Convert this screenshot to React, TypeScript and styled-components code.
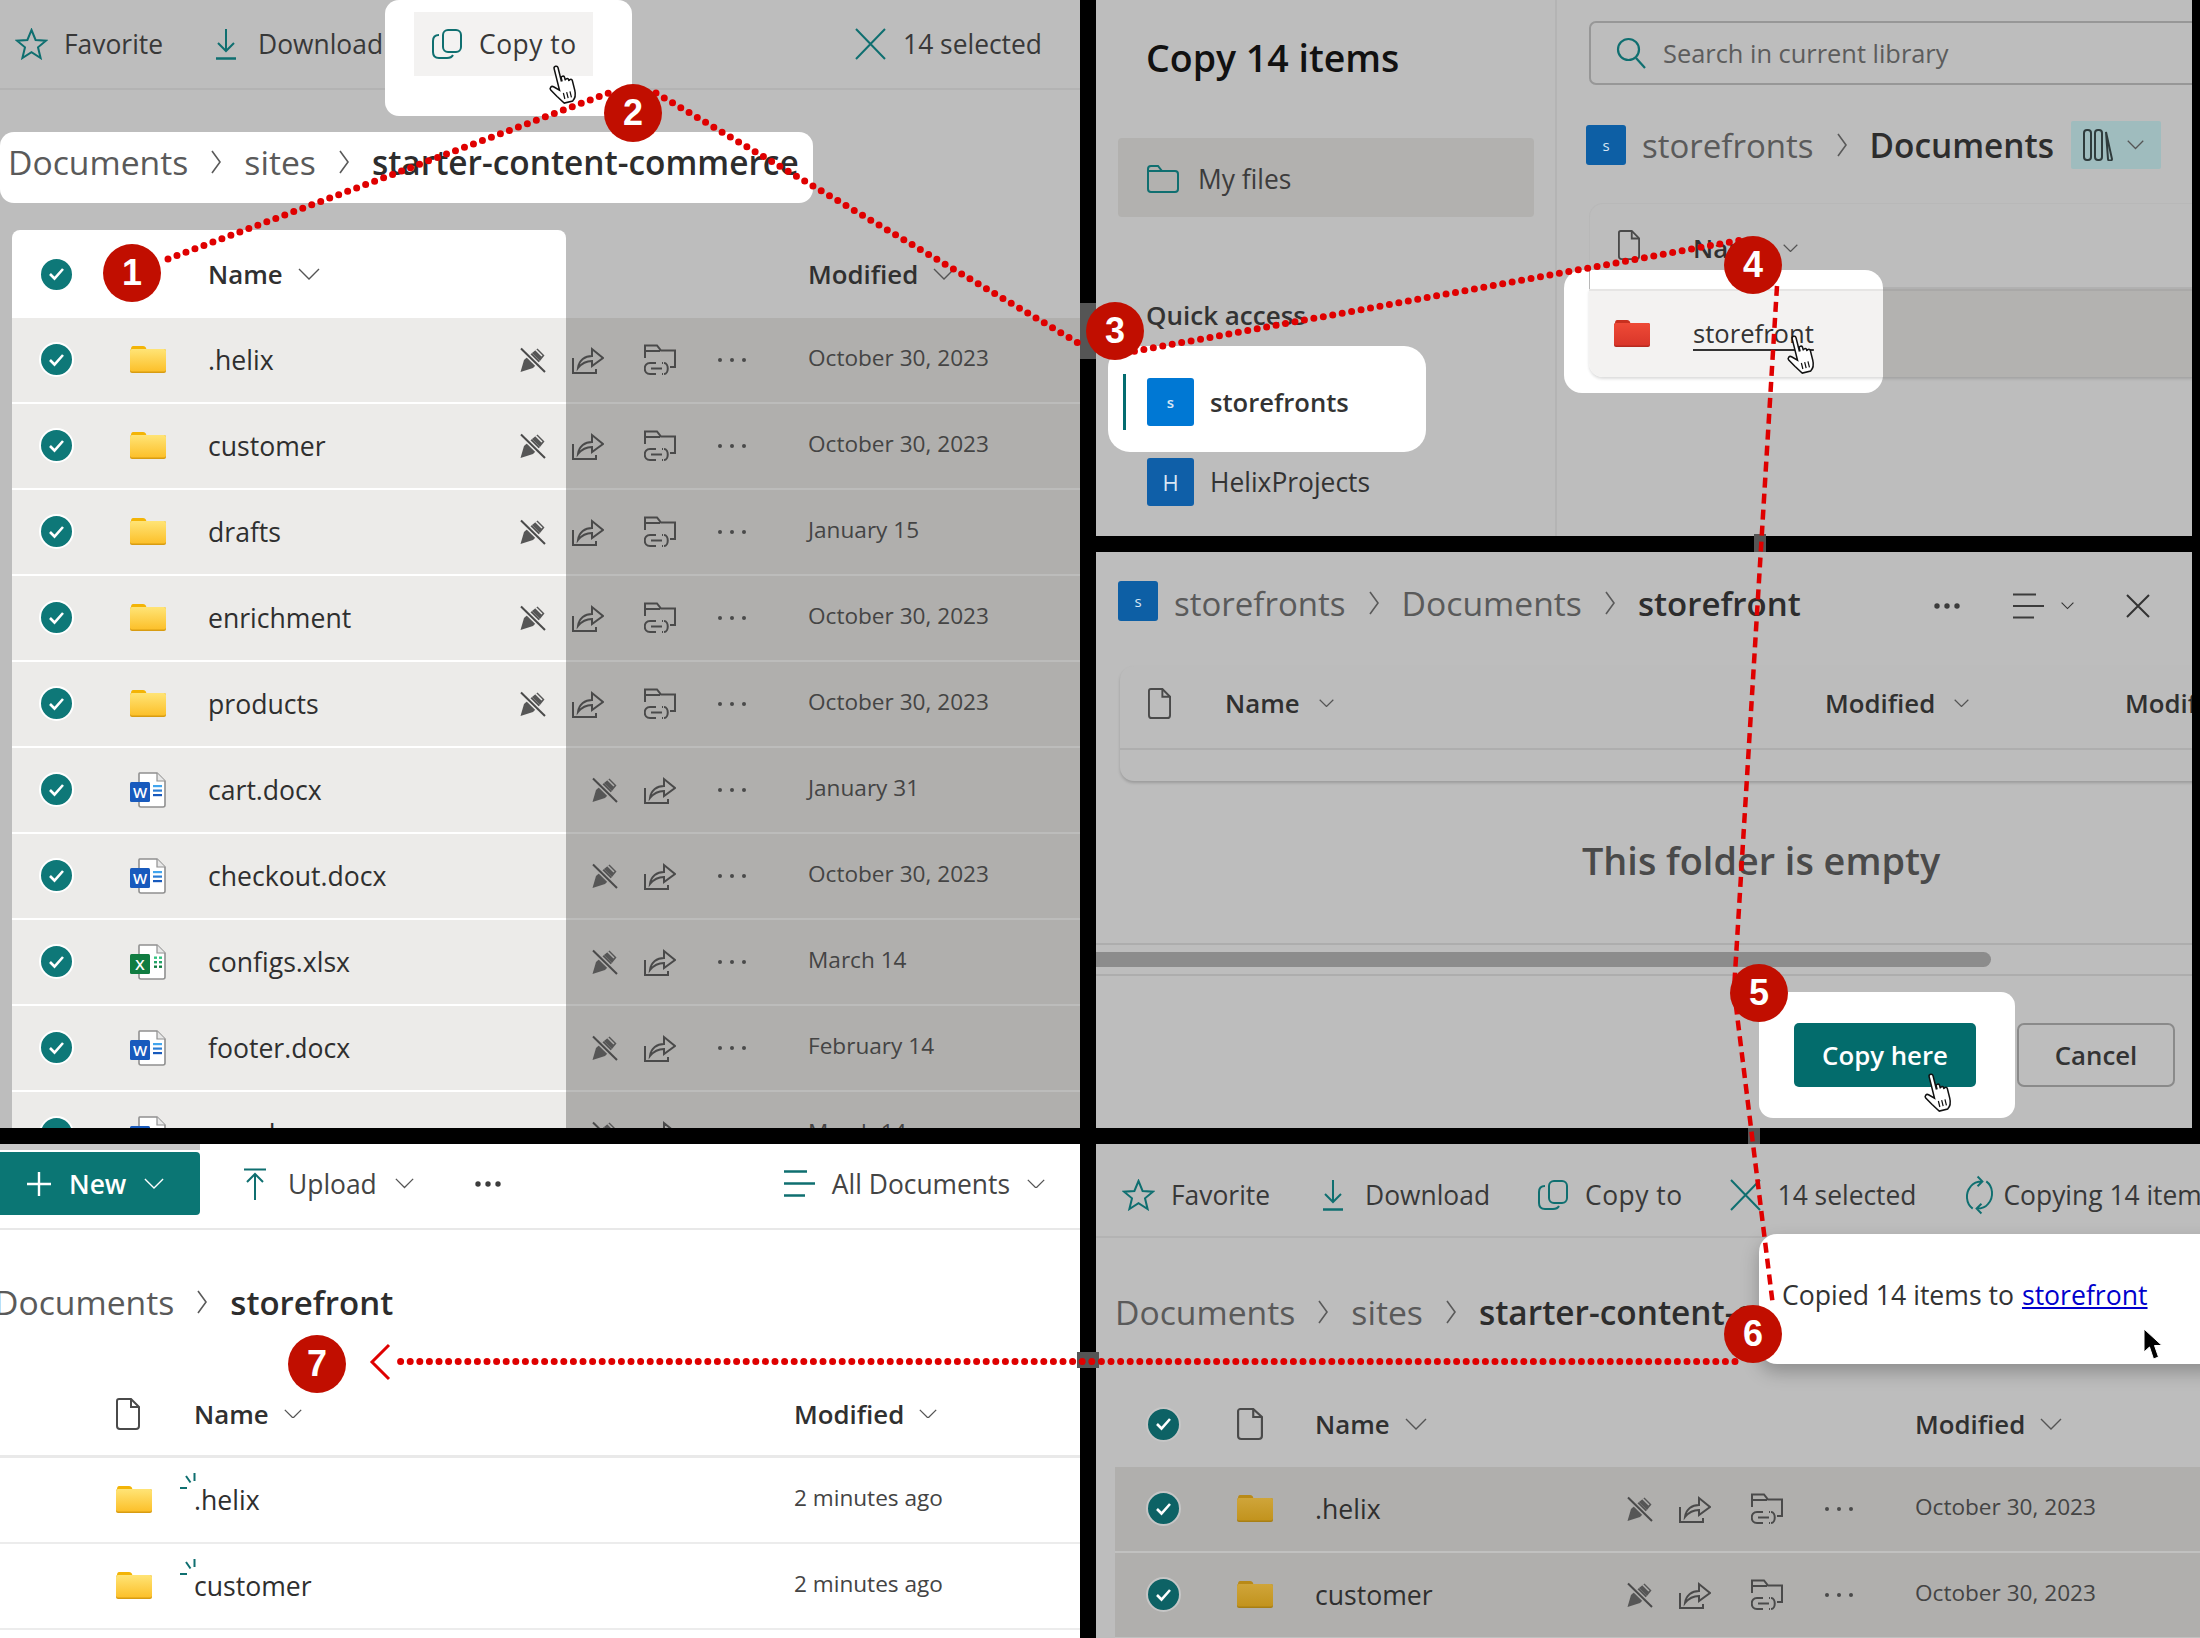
import React from 'react';
import styled, { createGlobalStyle, css } from 'styled-components';

const FONT = '"Open Sans", "Noto Sans", sans-serif';
const TEAL = '#0f6f70';
const INK = '#383838';

const GlobalStyle = createGlobalStyle`
  html, body { margin: 0; padding: 0; background: #000; }
  body { font-family: ${FONT}; color: #333; }
  * { box-sizing: border-box; }
`;

/* ---------- icons ---------- */

const Star = () => (
  <svg width="33" height="32" viewBox="0 0 33 32" fill="none" stroke={TEAL} strokeWidth="2">
    <path d="M16.5 2 L20.6 12 L31 12.7 L23 19.3 L25.6 30 L16.5 24.2 L7.4 30 L10 19.3 L2 12.7 L12.4 12 Z" />
  </svg>
);

const Download = () => (
  <svg width="22" height="32" viewBox="0 0 22 32" fill="none" stroke={TEAL} strokeWidth="2">
    <path d="M11 1 V23 M3 15 L11 23 L19 15" />
    <path d="M1 30.5 H21" strokeWidth="2.5" />
  </svg>
);

const CopyIcon = () => (
  <svg width="30" height="30" viewBox="0 0 30 30" fill="none" stroke={TEAL} strokeWidth="2">
    <rect x="11" y="1" width="18" height="22" rx="5" />
    <path d="M7 6 C3 6 1 8 1 12 V23 C1 27 3 29 7 29 H15 C19 29 20 28 21 26" />
  </svg>
);

const CrossBig = () => (
  <svg width="31" height="32" viewBox="0 0 31 32" fill="none" stroke={TEAL} strokeWidth="2">
    <path d="M1 1 L30 31 M30 1 L1 31" />
  </svg>
);

const SyncIcon = () => (
  <svg width="34" height="40" viewBox="0 0 34 40" fill="none" stroke={TEAL} strokeWidth="2">
    <path d="M10 34 C3 29 2 18 8 11 C11 7 15 6 20 6 M15 1 L20 6 L15 11" />
    <path d="M24 6 C31 11 32 22 26 29 C23 33 19 34 14 34 M19 29 L14 34 L19 39" />
  </svg>
);

const Search = () => (
  <svg width="30" height="32" viewBox="0 0 30 32" fill="none" stroke={TEAL} strokeWidth="2.2">
    <circle cx="12.5" cy="12.5" r="10.5" />
    <path d="M20 21 L29 31" />
  </svg>
);

const OutlineFolder = () => (
  <svg width="32" height="28" viewBox="0 0 32 28" fill="none" stroke={TEAL} strokeWidth="2">
    <path d="M1 6 V4 C1 2 2 1 4 1 H11 L15 6 H28 C30 6 31 7 31 9 V24 C31 26 30 27 28 27 H4 C2 27 1 26 1 24 Z" />
    <path d="M1 6 H15" />
  </svg>
);

const PinOff = ({ gap }: { gap: string }) => (
  <svg width="26" height="26" viewBox="0 0 26 26" fill="none">
    <path d="M0.5 25 L4 13 L12 6 L20 14 L13 21 Z" fill="#565656" />
    <path d="M12 6 L17.5 1.5 L24.5 8.5 L20 14 Z" fill="#565656" />
    <path d="M15.5 2.5 L22 9" stroke={gap} strokeWidth="1.5" />
    <path d="M1 1.5 L25 25" stroke={gap} strokeWidth="5" />
    <path d="M1 1.5 L25 25" stroke="#4a4a4a" strokeWidth="2" />
  </svg>
);

const Share = () => (
  <svg width="32" height="28" viewBox="0 0 32 28" fill="none" stroke="#4a4a4a" strokeWidth="2">
    <path d="M1 12 V27 H24 V23" />
    <path d="M6 22 C7 14 13 10 20 10 V3 L31 12 L20 20 V15 C14 15 10 17 6 22 Z" />
  </svg>
);

const FolderLink = () => (
  <svg width="32" height="31" viewBox="0 0 32 31" fill="none" stroke="#4a4a4a" strokeWidth="2">
    <path d="M1 14 V1.5 H13 L17 6.5 H31 V23 H26 M1 7 H16" />
    <path d="M12 19 H6 C-1 19 -1 30 6 30 H12 M19 19 H18 M19 30 H18" />
    <path d="M20 19 C25 19 25 30 20 30" />
    <path d="M7 24.5 H18" />
  </svg>
);

const DotRow = () => (
  <svg width="28" height="6" viewBox="0 0 28 6" fill="#4a4a4a">
    <circle cx="2" cy="3" r="2" />
    <circle cx="14" cy="3" r="2" />
    <circle cx="26" cy="3" r="2" />
  </svg>
);

const HeavyDots = () => (
  <svg width="26" height="6" viewBox="0 0 26 6" fill="#3c3c3c">
    <circle cx="3" cy="3" r="2.7" />
    <circle cx="13" cy="3" r="2.7" />
    <circle cx="23" cy="3" r="2.7" />
  </svg>
);

const Chevron = ({ w = 22, color = '#555' }: { w?: number; color?: string }) => (
  <svg width={w} height={w * 0.55} viewBox="0 0 22 12" fill="none" stroke={color} strokeWidth={44 / (w + 10)}>
    <path d="M1 1 L11 11 L21 1" />
  </svg>
);

const CrumbChevron = () => (
  <svg width="10" height="24" viewBox="0 0 10 24" fill="none" stroke="#5a5a5a" strokeWidth="1.6">
    <path d="M1 1 L9 12 L1 23" />
  </svg>
);

const BlankFile = ({ w = 24, h = 32, stroke = '#4a4a4a' }: { w?: number; h?: number; stroke?: string }) => (
  <svg width={w} height={h} viewBox="0 0 24 32" fill="none" stroke={stroke} strokeWidth="2" preserveAspectRatio="none">
    <path d="M3 1 H15 L23 9 V28 C23 30 22 31 20 31 H4 C2 31 1 30 1 28 V3 C1 2 2 1 3 1 Z" />
    <path d="M15 1 V9 H23" />
  </svg>
);

const folderTones = {
  yellow: { tab: '#f3b406', top: '#ffe476', bottom: '#fcc02a', edge: '#d89c12', id: 'folder-yellow' },
  dim: { tab: '#b98a17', top: '#cfa53a', bottom: '#c2931d', edge: '#a87f14', id: 'folder-dim' },
  red: { tab: '#c7301f', top: '#ee4a36', bottom: '#d9362a', edge: '#b62a1f', id: 'folder-red' },
};

const Folder = ({ tone = 'yellow' }: { tone?: keyof typeof folderTones }) => {
  const t = folderTones[tone];
  return (
    <svg width="36" height="27" viewBox="0 0 36 27">
      <defs>
        <linearGradient id={t.id} x1="0" y1="0" x2="0" y2="1">
          <stop offset="0" stopColor={t.top} />
          <stop offset="1" stopColor={t.bottom} />
        </linearGradient>
      </defs>
      <path d="M1 5 V3 C1 1 2 0 3 0 H13 C15 0 15.5 1 16 2 L17 5 Z" fill={t.tab} />
      <rect x="0" y="3" width="36" height="24" rx="2" fill={t.edge} />
      <rect x="0" y="3" width="36" height="22.5" rx="2" fill={`url(#${t.id})`} />
    </svg>
  );
};

const OfficeDoc = ({ kind }: { kind: 'word' | 'excel' }) => {
  const word = kind === 'word';
  return (
    <svg width="36" height="36" viewBox="0 0 36 36">
      <path d="M9.5 1 H27 L35 9 V33 C35 34 34 35 33 35 H11 C10 35 9 34 9 33 V2 C9 1.5 9.2 1 9.5 1 Z" fill="#fff" stroke="#909090" strokeWidth="1.6" />
      <path d="M27 1 V9 H35" fill="#e8e8e8" stroke="#909090" strokeWidth="1.2" />
      {word ? (
        <>
          <rect x="23" y="13" width="9" height="2.2" fill="#41a5ee" />
          <rect x="23" y="17.5" width="9" height="2.2" fill="#2b7cd3" />
          <rect x="23" y="22" width="9" height="2.2" fill="#185abd" />
        </>
      ) : (
        <>
          <rect x="24" y="12.5" width="3" height="2.4" fill="#33c481" />
          <rect x="29" y="12.5" width="3" height="2.4" fill="#33c481" />
          <rect x="24" y="17" width="3" height="2.4" fill="#21a366" />
          <rect x="29" y="17" width="3" height="2.4" fill="#21a366" />
          <rect x="24" y="21.5" width="3" height="2.4" fill="#107c41" />
          <rect x="29" y="21.5" width="3" height="2.4" fill="#107c41" />
        </>
      )}
      <rect x="0" y="10" width="20" height="20" rx="1.5" fill={word ? '#185abd' : '#107c41'} />
      <text x="10" y="25.5" textAnchor="middle" fontFamily={FONT} fontSize="15" fontWeight="600" fill="#fff">
        {word ? 'W' : 'X'}
      </text>
    </svg>
  );
};

const Hand = () => (
  <svg width="37" height="42" viewBox="0 0 24 27">
    <g transform="rotate(-14 12 14)">
      <path
        d="M8 2.2 C8 .6 10.6 .6 10.6 2.2 V11 H11 V9.2 C11 8 13.2 8 13.2 9.2 V11.4 C13.2 10.2 15.4 10.2 15.4 11.4 V12.4 C15.4 11.2 17.6 11.2 17.6 12.6 V19 C17.6 22 16.2 24.5 14.6 25.5 H9 C8 24.2 7 22.5 5.5 20.2 L2.5 15.2 C1.8 13.6 3.6 12.4 4.8 13.5 L8 16.6 Z"
        fill="#fff"
        stroke="#111"
        strokeWidth="1"
      />
      <path d="M10 19 V23 M12.2 19 V23 M14.4 19 V23" stroke="#111" strokeWidth="0.8" />
    </g>
  </svg>
);

const ArrowCursor = () => (
  <svg width="20" height="34" viewBox="0 0 20 34">
    <path d="M1 1 V24 L6.5 19 L10.5 31 L15.5 29 L11.5 17.5 H19 Z" fill="#000" stroke="#fff" strokeWidth="1" />
  </svg>
);

/* ---------- page frame ---------- */

const Page = styled.div`
  position: relative;
  width: 2200px;
  height: 1638px;
  display: flex;
  gap: 16px;
  background: #000;
  overflow: hidden;
`;

const Column = styled.div<{ $w: number }>`
  width: ${(p) => p.$w}px;
  display: flex;
  flex-direction: column;
  gap: 16px;
`;

const Panel = styled.section<{ $h: number; $bg?: string; $row?: boolean; $gutter?: number }>`
  position: relative;
  isolation: isolate;
  height: ${(p) => p.$h}px;
  flex: none;
  overflow: hidden;
  margin-right: ${(p) => p.$gutter ?? 0}px;
  background: ${(p) => p.$bg ?? '#bdbdbd'};
  display: flex;
  flex-direction: ${(p) => (p.$row ? 'row' : 'column')};
`;

/* ---------- command bars ---------- */

const CommandBar = styled.div<{ $h: number; $top?: number; $left: number }>`
  position: relative;
  flex: none;
  height: ${(p) => p.$h}px;
  padding: ${(p) => p.$top ?? 0}px 0 2px ${(p) => p.$left}px;
  display: flex;
  align-items: center;
  gap: 46px;
  white-space: nowrap;
  &::after {
    content: '';
    position: absolute;
    left: 0;
    right: 0;
    bottom: 0;
    height: 2px;
    background: #b3b3b3;
    z-index: -2;
  }
`;

const CommandItem = styled.div<{ $active?: boolean; $end?: boolean; $gap?: number }>`
  position: relative;
  flex: none;
  display: flex;
  align-items: center;
  gap: ${(p) => p.$gap ?? 16}px;
  font-size: 26.4px;
  color: ${INK};
  ${(p) =>
    p.$end &&
    css`
      margin-left: auto;
      padding-right: 38px;
    `}
  ${(p) =>
    p.$active &&
    css`
      height: 64px;
      margin: 0 -15px;
      padding: 0 16px;
      background: #f3f2f1;
      &::before {
        content: '';
        position: absolute;
        inset: -12px -39px -40px -29px;
        background: #fff;
        border-radius: 14px;
        z-index: -1;
      }
    `}
`;

const IconBox = styled.span`
  width: 33px;
  flex: none;
  display: flex;
  justify-content: center;
  align-items: center;
`;

const WideLabel = styled.span`
  letter-spacing: 0.5px;
`;

/* ---------- breadcrumbs ---------- */

const Crumbs = styled.div<{ $spot?: boolean; $top?: number; $left?: number; $h?: number; $lift?: number; $drop?: number }>`
  flex: none;
  height: ${(p) => p.$h ?? 50}px;
  margin-top: ${(p) => p.$top ?? 0}px;
  padding: ${(p) => p.$drop ?? 0}px 0 ${(p) => p.$lift ?? 0}px ${(p) => p.$left ?? 0}px;
  display: flex;
  align-items: center;
  gap: 23px;
  white-space: nowrap;
  ${(p) =>
    p.$spot &&
    css`
      width: 813px;
      background: #fff;
      border-radius: 14px;
    `}
`;

const CrumbText = styled.span<{ $strong?: boolean; $tight?: boolean }>`
  font-size: ${(p) => (p.$tight ? 33 : p.$strong ? 33.4 : 33.7)}px;
  font-weight: ${(p) => (p.$strong ? 600 : 400)};
  color: ${(p) => (p.$strong ? '#2d2d2d' : '#5a5a5a')};
`;

const SiteTile = styled.div<{ $w: number; $h: number; $color: string; $size?: number }>`
  flex: none;
  width: ${(p) => p.$w}px;
  height: ${(p) => p.$h}px;
  display: flex;
  align-items: center;
  justify-content: center;
  background: ${(p) => p.$color};
  border-radius: 3px;
  color: #d8e6f4;
  font-size: ${(p) => p.$size ?? 15}px;
`;

/* ---------- file lists ---------- */

const tones = {
  spot: css`
    background: linear-gradient(to right, #fff 554px, #bcbcbb 554px) bottom / 100% 2px no-repeat,
      linear-gradient(to right, #ecebe9 554px, #b0afad 554px);
  `,
  dim: css`
    background: linear-gradient(#c1c1c0, #c1c1c0) bottom / 100% 2px no-repeat, #b0afad;
  `,
  plain: css`
    background: linear-gradient(#ececec, #ececec) bottom / 100% 2px no-repeat, #fff;
  `,
};

const grid = css`
  display: grid;
  grid-template-columns: 118px 78px 310px 290px auto;
  align-items: center;
`;

const RowShell = styled.div<{ $tone: keyof typeof tones; $left: number; $inset?: number }>`
  ${grid}
  flex: none;
  height: 86px;
  margin-left: ${(p) => p.$left}px;
  padding-left: ${(p) => p.$inset ?? 0}px;
  padding-bottom: 3px;
  ${(p) => tones[p.$tone]}
  white-space: nowrap;
`;

const HeaderShell = styled.div<{ $left: number; $inset?: number; $spot?: boolean; $top?: number; $line?: boolean; $h?: number }>`
  ${grid}
  position: relative;
  flex: none;
  height: ${(p) => p.$h ?? 86}px;
  margin-top: ${(p) => p.$top ?? 0}px;
  margin-left: ${(p) => p.$left}px;
  padding-left: ${(p) => p.$inset ?? 0}px;
  white-space: nowrap;
  ${(p) => p.$line && 'border-bottom: 3px solid #e9e9e9;'}
  ${(p) =>
    p.$spot &&
    css`
      &::before {
        content: '';
        position: absolute;
        left: 0;
        top: 0;
        bottom: 0;
        width: 554px;
        background: #fff;
        border-radius: 8px 8px 0 0;
        z-index: -1;
      }
    `}
`;

const CheckCircle = styled.span<{ $dark?: boolean }>`
  width: 35px;
  height: 35px;
  margin-left: 27px;
  border-radius: 50%;
  border: 2px solid ${(p) => (p.$dark ? '#c6c6c6' : '#fff')};
  background: ${(p) => (p.$dark ? '#0d6265' : '#0e7878')};
  display: flex;
  align-items: center;
  justify-content: center;
`;

const Check = ({ dark }: { dark?: boolean }) => (
  <CheckCircle $dark={dark}>
    <svg width="17" height="14" viewBox="0 0 17 14" fill="none" stroke="#fff" strokeWidth="2.6">
      <path d="M2 7 L6.5 11.5 L15 2" />
    </svg>
  </CheckCircle>
);

const Label = styled.span`
  grid-column: 3;
  display: flex;
  align-items: center;
  gap: 15px;
  font-size: 25.8px;
  font-weight: 600;
  color: #303030;
`;

const DateLabel = styled(Label)`
  grid-column: 5;
`;

const NameCell = styled.span`
  position: relative;
  font-size: 26.6px;
  color: #2f2f2f;
`;

const SyncTicks = styled.svg`
  position: absolute;
  left: -15px;
  top: -10px;
`;

const ActionCell = styled.span`
  display: flex;
  justify-content: flex-end;
  align-items: center;
  gap: 32px;
  padding-right: 56px;
`;

const ActionSlot = styled.span<{ $pin?: boolean }>`
  width: 40px;
  flex: none;
  display: flex;
  justify-content: center;
  ${(p) => p.$pin && 'margin-right: -17px;'}
`;

const DateCell = styled.span`
  grid-column: 5;
  font-size: 22.6px;
  color: #444;
  margin-bottom: 4px;
`;

type Kind = 'folder' | 'word' | 'excel';

interface FileRowProps {
  name: string;
  kind: Kind;
  date: string;
  tone: keyof typeof tones;
  left: number;
  inset?: number;
  selected?: boolean;
  syncing?: boolean;
}

const FileRow = ({ name, kind, date, tone, left, inset, selected, syncing }: FileRowProps) => (
  <RowShell $tone={tone} $left={left} $inset={inset}>
    <span>{selected && <Check dark={tone === 'dim'} />}</span>
    {kind === 'folder' ? <Folder tone={tone === 'dim' ? 'dim' : 'yellow'} /> : <OfficeDoc kind={kind} />}
    <NameCell>
      {syncing && (
        <SyncTicks width="18" height="18" viewBox="0 0 18 18" fill="none" stroke={TEAL} strokeWidth="2">
          <path d="M15.5 1 V9 M7 4 L11.5 10.5 M1 16 H8" />
        </SyncTicks>
      )}
      {name}
    </NameCell>
    {selected ? (
      <ActionCell>
        <ActionSlot $pin>
          <PinOff gap={tone === 'spot' && kind === 'folder' ? '#ecebe9' : '#b0afad'} />
        </ActionSlot>
        <ActionSlot>
          <Share />
        </ActionSlot>
        {kind === 'folder' && (
          <ActionSlot>
            <FolderLink />
          </ActionSlot>
        )}
        <ActionSlot>
          <DotRow />
        </ActionSlot>
      </ActionCell>
    ) : (
      <span />
    )}
    <DateCell>{date}</DateCell>
  </RowShell>
);

/* ---------- copy dialog, left side ---------- */

const Rail = styled.div`
  flex: none;
  width: 461px;
  padding: 31px 21px 0 22px;
  border-right: 2px solid #b4b4b4;
  display: flex;
  flex-direction: column;
`;

const RailTitle = styled.h2`
  margin: 0;
  padding-left: 28px;
  font-size: 37.5px;
  line-height: 54px;
  font-weight: 600;
  color: #111;
`;

const RailSelected = styled.div`
  flex: none;
  margin-top: 53px;
  height: 79px;
  padding: 2px 0 0 29px;
  display: flex;
  align-items: center;
  gap: 19px;
  background: #b2b1af;
  border-radius: 4px;
  font-size: 26.4px;
  color: #3c3c3c;
`;

const RailHeading = styled.div`
  margin-top: 80px;
  padding-left: 28px;
  font-size: 26px;
  line-height: 36px;
  font-weight: 600;
  color: #333;
`;

const RailSite = styled.div<{ $spot?: boolean; $top: number }>`
  position: relative;
  flex: none;
  margin-top: ${(p) => p.$top}px;
  padding-left: 29px;
  height: 48px;
  display: flex;
  align-items: center;
  gap: 16px;
  font-size: ${(p) => (p.$spot ? 25.6 : 26.4)}px;
  font-weight: ${(p) => (p.$spot ? 600 : 400)};
  color: #333;
  ${(p) =>
    p.$spot &&
    css`
      &::before {
        content: '';
        position: absolute;
        inset: -32px 108px -26px -10px;
        background: #fff;
        border-radius: 22px;
        z-index: -1;
      }
      &::after {
        content: '';
        position: absolute;
        left: 5px;
        top: -4px;
        width: 3px;
        height: 56px;
        background: #036c70;
      }
    `}
`;

/* ---------- copy dialog, right side ---------- */

const Browser = styled.div`
  flex: 1;
  min-width: 0;
  padding: 21px 0 0 32px;
  display: flex;
  flex-direction: column;
`;

const SearchBox = styled.div`
  flex: none;
  height: 64px;
  margin-right: -12px;
  padding-left: 25px;
  display: flex;
  align-items: center;
  gap: 17px;
  border: 2px solid #979797;
  border-radius: 7px;
  font-size: 25.4px;
  color: #5c5c5c;
`;

const ViewButton = styled.div`
  flex: none;
  width: 90px;
  height: 48px;
  margin-left: -6px;
  padding-left: 12px;
  display: flex;
  align-items: center;
  gap: 12px;
  background: #9fbcbe;
  border-radius: 2px;
`;

const BrowseHeader = styled.div`
  position: relative;
  flex: none;
  margin-top: 35px;
  margin-right: -10px;
  height: 86px;
  padding: 26px 0 0 28px;
  display: flex;
  align-items: flex-start;
  gap: 53px;
  border-radius: 14px 0 0 0;
  border-left: 1px solid #b8b8b8;
  border-top: 1px solid #b8b8b8;
  font-size: 25.8px;
  font-weight: 600;
  color: #303030;
  &::after {
    content: '';
    position: absolute;
    left: 0;
    right: 0;
    bottom: 0;
    height: 2px;
    background: #b1b1b1;
    z-index: -2;
  }
`;

const HeaderName = styled.span`
  display: flex;
  align-items: center;
  gap: 15px;
`;

const BrowseRow = styled.div`
  position: relative;
  flex: none;
  height: 88px;
  margin-right: -10px;
  padding-left: 25px;
  display: flex;
  align-items: center;
  gap: 43px;
  border-radius: 0 0 0 14px;
  background: linear-gradient(to right, #f3f2f1 294px, #b3b2b0 294px);
  box-shadow: 0 2px 3px rgba(0, 0, 0, 0.14), inset 0 2px 0 rgba(0, 0, 0, 0.05);
  font-size: 25.6px;
  color: #333;
  &::before {
    content: '';
    position: absolute;
    left: -25px;
    top: -19px;
    bottom: -16px;
    width: 319px;
    background: #fff;
    border-radius: 18px;
    z-index: -1;
  }
`;

const FolderLinkText = styled.span`
  text-decoration: underline;
  text-underline-offset: 6px;
`;

/* ---------- destination picker ---------- */

const PickerBar = styled.div`
  flex: none;
  height: 40px;
  margin-top: 29px;
  padding: 0 42px 0 22px;
  display: flex;
  align-items: center;
  gap: 16px;
`;

const PickerTools = styled.div`
  margin-left: auto;
  padding-top: 10px;
  display: flex;
  align-items: center;
  gap: 52px;
`;

const ToolGroup = styled.div`
  display: flex;
  align-items: center;
  gap: 17px;
`;

const PickerCard = styled.div`
  flex: none;
  height: 115px;
  margin: 45px -20px 0 24px;
  border-radius: 14px 0 0 14px;
  box-shadow: 0 2px 3px rgba(0, 0, 0, 0.18);
  background: #bcbcbc;
`;

const PickerHead = styled.div`
  height: 84px;
  padding: 0 0 8px 28px;
  display: flex;
  align-items: center;
  border-bottom: 2px solid #aeaeae;
  font-size: 25.8px;
  font-weight: 600;
  color: #303030;
  white-space: nowrap;
`;

const PickerCol = styled.span<{ $w: number }>`
  flex: none;
  width: ${(p) => p.$w}px;
  display: flex;
  align-items: center;
  gap: 19px;
`;

const EmptyNote = styled.div`
  flex: none;
  margin-top: 52px;
  padding-left: 486px;
  font-size: 37.8px;
  line-height: 56px;
  font-weight: 600;
  color: #4a4a4a;
`;

const ScrollTrack = styled.div`
  flex: none;
  margin-top: 54px;
  height: 33px;
  display: flex;
  align-items: center;
  border-top: 2px solid #adadad;
  border-bottom: 2px solid #adadad;
`;

const ScrollThumb = styled.div`
  width: 895px;
  height: 15px;
  background: #8c8c8c;
  border-radius: 0 8px 8px 0;
`;

const FooterBar = styled.div`
  flex: none;
  margin-top: 47px;
  padding-right: 17px;
  display: flex;
  justify-content: flex-end;
  gap: 41px;
`;

const PrimaryButton = styled.button`
  position: relative;
  width: 182px;
  height: 64px;
  border: 0;
  padding: 0;
  background: #036c6c;
  border-radius: 5px;
  color: #fff;
  font: 600 25.8px ${FONT};
  &::before {
    content: '';
    position: absolute;
    inset: -31px -39px -31px -35px;
    background: #fff;
    border-radius: 14px;
    z-index: -1;
  }
`;

const GhostButton = styled.button`
  width: 158px;
  height: 64px;
  padding: 0;
  background: transparent;
  border: 2px solid #8a8a8a;
  border-radius: 7px;
  color: #333;
  font: 600 25.8px ${FONT};
`;

/* ---------- result library ---------- */

const TopStrip = styled.div`
  flex: none;
  width: 200px;
  height: 6px;
  background: #c8c8c8;
`;

const LibraryBar = styled.div`
  flex: none;
  height: 63px;
  margin-top: 2px;
  padding-right: 35px;
  display: flex;
  align-items: center;
  font-size: 26.4px;
  color: #444;
  white-space: nowrap;
`;

const NewButton = styled.div`
  flex: none;
  width: 200px;
  height: 63px;
  padding-left: 27px;
  display: flex;
  align-items: center;
  gap: 18px;
  background: #0b7674;
  border-radius: 0 4px 4px 0;
  color: #fff;
  font-weight: 600;
  font-size: 26.4px;
`;

const BarGroup = styled.div<{ $left?: number; $push?: boolean }>`
  flex: none;
  display: flex;
  align-items: center;
  gap: 22px;
  margin-left: ${(p) => (p.$push ? 'auto' : `${p.$left ?? 0}px`)};
  ${(p) => p.$push && 'gap: 17px;'}
`;

const ChevronGap = styled.span`
  display: flex;
  margin-left: -4px;
`;

const HairLine = styled.div`
  flex: none;
  height: 2px;
  margin-top: 13px;
  background: #e8e8e8;
`;

/* ---------- toast ---------- */

const Toast = styled.div`
  position: absolute;
  left: 663px;
  top: 90px;
  width: 460px;
  height: 130px;
  padding: 0 0 8px 23px;
  display: flex;
  align-items: center;
  gap: 8px;
  background: #fff;
  border-radius: 18px 0 0 18px;
  box-shadow: 0 8px 18px rgba(0, 0, 0, 0.25);
  font-size: 26.6px;
  color: #333;
  white-space: nowrap;
`;

const ToastLink = styled.a`
  color: #0000cc;
  text-decoration: underline;
`;

/* ---------- annotation layer ---------- */

const Annotations = styled.div`
  position: absolute;
  inset: 0;
  z-index: 5;
  pointer-events: none;
`;

const Marker = styled.div<{ $x: number; $y: number }>`
  position: absolute;
  left: ${(p) => p.$x - 29}px;
  top: ${(p) => p.$y - 29}px;
  width: 58px;
  height: 58px;
  display: flex;
  align-items: center;
  justify-content: center;
  border-radius: 50%;
  background: #c10e00;
  color: #fff;
  font: 700 36px 'Liberation Sans', Arial, sans-serif;
`;

const Pointer = styled.div<{ $x: number; $y: number }>`
  position: absolute;
  left: ${(p) => p.$x}px;
  top: ${(p) => p.$y}px;
  line-height: 0;
`;

const library: { name: string; kind: Kind; date: string }[] = [
  { name: '.helix', kind: 'folder', date: 'October 30, 2023' },
  { name: 'customer', kind: 'folder', date: 'October 30, 2023' },
  { name: 'drafts', kind: 'folder', date: 'January 15' },
  { name: 'enrichment', kind: 'folder', date: 'October 30, 2023' },
  { name: 'products', kind: 'folder', date: 'October 30, 2023' },
  { name: 'cart.docx', kind: 'word', date: 'January 31' },
  { name: 'checkout.docx', kind: 'word', date: 'October 30, 2023' },
  { name: 'configs.xlsx', kind: 'excel', date: 'March 14' },
  { name: 'footer.docx', kind: 'word', date: 'February 14' },
  { name: 'nav.docx', kind: 'word', date: 'March 14' },
];

const markers: [number, number, number][] = [
  [1, 132, 273],
  [2, 633, 113],
  [3, 1115, 331],
  [4, 1753, 265],
  [5, 1759, 993],
  [6, 1753, 1334],
  [7, 317, 1364],
];

export default function App() {
  return (
    <Page>
      <GlobalStyle />
      <Column $w={1080}>
        <Panel $h={1128}>
          <CommandBar $h={90} $left={15}>
            <CommandItem>
              <IconBox>
                <Star />
              </IconBox>
              Favorite
            </CommandItem>
            <CommandItem>
              <IconBox>
                <Download />
              </IconBox>
              Download
            </CommandItem>
            <CommandItem $active>
              <IconBox>
                <CopyIcon />
              </IconBox>
              <WideLabel>Copy to</WideLabel>
            </CommandItem>
            <CommandItem $end>
              <IconBox>
                <CrossBig />
              </IconBox>
              14 selected
            </CommandItem>
          </CommandBar>
          <Crumbs $spot $top={42} $left={8} $h={71} $lift={11}>
            <CrumbText>Documents</CrumbText>
            <CrumbChevron />
            <CrumbText>sites</CrumbText>
            <CrumbChevron />
            <CrumbText $strong>starter-content-commerce</CrumbText>
          </Crumbs>
          <HeaderShell $left={12} $spot $top={27} $h={88}>
            <Check />
            <span />
            <Label>
              Name <Chevron />
            </Label>
            <DateLabel>
              Modified <Chevron />
            </DateLabel>
          </HeaderShell>
          {library.map((f) => (
            <FileRow key={f.name} {...f} tone="spot" left={12} selected />
          ))}
        </Panel>
        <Panel $h={494} $bg="#fff">
          <TopStrip />
          <LibraryBar>
            <NewButton>
              <svg width="24" height="24" viewBox="0 0 24 24" stroke="#fff" strokeWidth="2.4">
                <path d="M12 0 V24 M0 12 H24" />
              </svg>
              New
              <Chevron w={20} color="#fff" />
            </NewButton>
            <BarGroup $left={44}>
              <svg width="22" height="32" viewBox="0 0 22 32" fill="none" stroke={TEAL} strokeWidth="2">
                <path d="M0 1.5 H22 M11 6 V32 M3 14 L11 6 L19 14" />
              </svg>
              Upload
              <ChevronGap>
                <Chevron w={19} />
              </ChevronGap>
            </BarGroup>
            <BarGroup $left={61}>
              <HeavyDots />
            </BarGroup>
            <BarGroup $push>
              <svg width="32" height="27" viewBox="0 0 32 27" fill="none" stroke={TEAL} strokeWidth="2.4">
                <path d="M1 1.5 H24 M1 13.5 H32 M1 25.5 H22" />
              </svg>
              All Documents
              <Chevron w={18} />
            </BarGroup>
          </LibraryBar>
          <HairLine />
          <Crumbs $top={47}>
            <CrumbText style={{ marginLeft: -6 }}>Documents</CrumbText>
            <CrumbChevron />
            <CrumbText $strong $tight>
              storefront
            </CrumbText>
          </Crumbs>
          <HeaderShell $left={-2} $top={45} $line>
            <span />
            <BlankFile />
            <Label>
              Name <Chevron w={18} />
            </Label>
            <DateLabel>
              Modified <Chevron w={18} />
            </DateLabel>
          </HeaderShell>
          <FileRow name=".helix" kind="folder" date="2 minutes ago" tone="plain" left={-2} syncing />
          <FileRow name="customer" kind="folder" date="2 minutes ago" tone="plain" left={-2} syncing />
        </Panel>
      </Column>
      <Column $w={1104}>
        <Panel $h={536} $row $gutter={8}>
          <Rail>
            <RailTitle>Copy 14 items</RailTitle>
            <RailSelected>
              <OutlineFolder />
              My files
            </RailSelected>
            <RailHeading>Quick access</RailHeading>
            <RailSite $spot $top={45}>
              <SiteTile $w={47} $h={48} $color="#0078d4">
                s
              </SiteTile>
              storefronts
            </RailSite>
            <RailSite $top={32}>
              <SiteTile $w={47} $h={48} $color="#0f5fa8" $size={22}>
                H
              </SiteTile>
              HelixProjects
            </RailSite>
          </Rail>
          <Browser>
            <SearchBox>
              <Search />
              Search in current library
            </SearchBox>
            <Crumbs $top={35} $h={48} $drop={2} style={{ marginLeft: -3 }}>
              <SiteTile $w={40} $h={40} $color="#0d5fa5" style={{ marginRight: -7 }}>
                s
              </SiteTile>
              <CrumbText $tight>storefronts</CrumbText>
              <CrumbChevron />
              <CrumbText $strong>Documents</CrumbText>
              <ViewButton>
                <svg width="32" height="32" viewBox="0 0 32 32" fill="none" stroke="#2f3b3c" strokeWidth="2">
                  <rect x="1" y="1" width="7" height="30" rx="3" />
                  <rect x="12" y="1" width="7" height="30" rx="3" />
                  <path d="M23 3 L29 30 C29 32 25 32 25 30 L23 3 Z" />
                </svg>
                <Chevron w={17} />
              </ViewButton>
            </Crumbs>
            <BrowseHeader>
              <BlankFile w={22} h={30} />
              <HeaderName>
                Name <Chevron w={15} />
              </HeaderName>
            </BrowseHeader>
            <BrowseRow>
              <Folder tone="red" />
              <FolderLinkText>storefront</FolderLinkText>
            </BrowseRow>
          </Browser>
        </Panel>
        <Panel $h={576} $gutter={8}>
          <PickerBar>
            <SiteTile $w={40} $h={40} $color="#0d5fa5">
              s
            </SiteTile>
            <Crumbs $drop={4}>
              <CrumbText $tight>storefronts</CrumbText>
              <CrumbChevron />
              <CrumbText>Documents</CrumbText>
              <CrumbChevron />
              <CrumbText $strong $tight>
                storefront
              </CrumbText>
            </Crumbs>
            <PickerTools>
              <HeavyDots />
              <ToolGroup>
                <svg width="32" height="26" viewBox="0 0 32 26" fill="none" stroke="#3c3c3c" strokeWidth="2.2">
                  <path d="M1 1.5 H24 M1 13 H32 M1 24.5 H22" />
                </svg>
                <Chevron w={13} color="#333" />
              </ToolGroup>
              <svg width="24" height="24" viewBox="0 0 24 24" fill="none" stroke="#333" strokeWidth="2">
                <path d="M1 1 L23 23 M23 1 L1 23" />
              </svg>
            </PickerTools>
          </PickerBar>
          <PickerCard>
            <PickerHead>
              <PickerCol $w={77}>
                <BlankFile w={23} h={31} />
              </PickerCol>
              <PickerCol $w={600}>
                Name <Chevron w={15} />
              </PickerCol>
              <PickerCol $w={300}>
                Modified <Chevron w={15} />
              </PickerCol>
              <PickerCol $w={200}>Modified By</PickerCol>
            </PickerHead>
          </PickerCard>
          <EmptyNote>This folder is empty</EmptyNote>
          <ScrollTrack>
            <ScrollThumb />
          </ScrollTrack>
          <FooterBar>
            <PrimaryButton>Copy here</PrimaryButton>
            <GhostButton>Cancel</GhostButton>
          </FooterBar>
        </Panel>
        <Panel $h={494}>
          <CommandBar $h={94} $top={10} $left={26}>
            <CommandItem>
              <IconBox>
                <Star />
              </IconBox>
              Favorite
            </CommandItem>
            <CommandItem>
              <IconBox>
                <Download />
              </IconBox>
              Download
            </CommandItem>
            <CommandItem>
              <IconBox>
                <CopyIcon />
              </IconBox>
              <WideLabel>Copy to</WideLabel>
            </CommandItem>
            <CommandItem>
              <IconBox>
                <CrossBig />
              </IconBox>
              14 selected
            </CommandItem>
            <CommandItem $gap={8}>
              <IconBox>
                <SyncIcon />
              </IconBox>
              Copying 14 items
            </CommandItem>
          </CommandBar>
          <Crumbs $top={49} $left={19}>
            <CrumbText>Documents</CrumbText>
            <CrumbChevron />
            <CrumbText>sites</CrumbText>
            <CrumbChevron />
            <CrumbText $strong>starter-content-commerce</CrumbText>
          </Crumbs>
          <HeaderShell $left={19} $inset={4} $top={44}>
            <Check dark />
            <BlankFile w={26} h={32} />
            <Label>
              Name <Chevron />
            </Label>
            <DateLabel>
              Modified <Chevron />
            </DateLabel>
          </HeaderShell>
          <FileRow name=".helix" kind="folder" date="October 30, 2023" tone="dim" left={19} inset={4} selected />
          <FileRow name="customer" kind="folder" date="October 30, 2023" tone="dim" left={19} inset={4} selected />
          <Toast>
            Copied 14 items to <ToastLink>storefront</ToastLink>
          </Toast>
        </Panel>
      </Column>
      <Annotations>
        <svg width="2200" height="1638" viewBox="0 0 2200 1638" fill="none">
          <g fill="#555">
            <rect x="1080" y="303" width="16" height="56" />
            <rect x="1754" y="534" width="12" height="18" />
            <rect x="1748" y="1128" width="12" height="16" />
            <rect x="1077" y="1352" width="22" height="16" />
          </g>
          <g stroke="#df0000" strokeWidth="7" strokeLinecap="round" strokeDasharray="0 9.6">
            <path d="M168 259 L614 91" />
            <path d="M656 93 L1085 347" />
            <path d="M1125 353 L1741 240" />
            <path d="M1735 1361.5 L392 1361.5" />
          </g>
          <path
            d="M1777 286 L1734 990 L1773 1306"
            stroke="#df0000"
            strokeWidth="4.5"
            strokeDasharray="10 6"
          />
          <path d="M389 1345 L372 1362 L389 1379" stroke="#df0000" strokeWidth="3" />
        </svg>
        {markers.map(([n, x, y]) => (
          <Marker key={n} $x={x} $y={y}>
            {n}
          </Marker>
        ))}
        <Pointer $x={546} $y={63}>
          <Hand />
        </Pointer>
        <Pointer $x={1784} $y={333}>
          <Hand />
        </Pointer>
        <Pointer $x={1921} $y={1071}>
          <Hand />
        </Pointer>
        <Pointer $x={2143} $y={1328}>
          <ArrowCursor />
        </Pointer>
      </Annotations>
    </Page>
  );
}
